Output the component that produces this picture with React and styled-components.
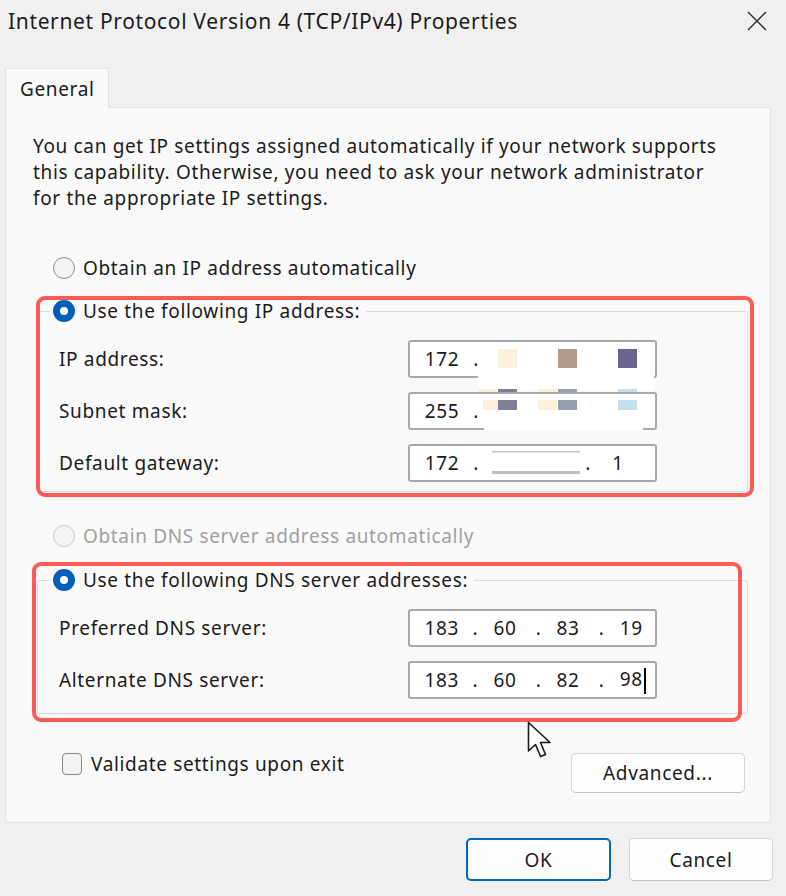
import styled, { createGlobalStyle } from 'styled-components';

const FONT = "'Noto Sans', 'Liberation Sans', Arial, sans-serif";

const GlobalStyle = createGlobalStyle`
  html, body {
    margin: 0;
    padding: 0;
  }
  body {
    background: #f0f0f0;
    font-family: ${FONT};
    letter-spacing: 0.65px;
    color: #1b1b1b;
  }
`;

const Window = styled.div`
  position: relative;
  width: 786px;
  height: 896px;
  overflow: hidden;
  background: #f0f0f0;
  display: flex;
  flex-direction: column;
`;

const TitleBar = styled.div`
  height: 42px;
  display: flex;
  align-items: center;
  justify-content: space-between;
  padding: 0 18px 0 8px;
`;

const Title = styled.div`
  font-size: 21px;
  color: #1b1b1b;
`;

const CloseButton = styled.div`
  width: 22px;
  height: 22px;
  display: flex;
  align-items: center;
  justify-content: center;
`;

const TabStrip = styled.div`
  margin-top: 26px;
  padding-left: 5px;
  display: flex;
`;

const Tab = styled.div`
  position: relative;
  z-index: 1;
  box-sizing: border-box;
  width: 104px;
  height: 40px;
  margin-bottom: -1px;
  padding-left: 14px;
  display: flex;
  align-items: center;
  font-size: 19px;
  background: #f9f9f9;
  border: 1px solid #e3e3e3;
  border-bottom: none;
`;

const Panel = styled.div`
  box-sizing: border-box;
  height: 716px;
  margin: 0 15px 0 5px;
  padding: 25px 22px 0 27px;
  background: #f9f9f9;
  border: 1px solid #e3e3e3;
  display: flex;
  flex-direction: column;
`;

const Description = styled.p`
  margin: 0;
  font-size: 19px;
  line-height: 26px;
  white-space: nowrap;
`;

const OptionRow = styled.div`
  display: flex;
  align-items: center;
  gap: 8px;
  height: 26px;
  font-size: 19px;
  color: ${(p) => (p.disabled ? '#a0a0a0' : '#1b1b1b')};
  margin: ${(p) => p.margin || '0'};
`;

const Radio = styled.span`
  box-sizing: border-box;
  width: 22px;
  height: 22px;
  border-radius: 50%;
  flex-shrink: 0;
  ${(p) =>
    p.checked
      ? `
    border: 7px solid #005fb8;
    box-shadow: inset 0 0 0 5px #ffffff;
    background: #ffffff;
  `
      : `
    background: #f3f3f3;
    border: 1.5px solid ${p.disabled ? '#c6c6c6' : '#8a8a8a'};
  `}
`;

const GroupWrap = styled.div`
  position: relative;
  margin: ${(p) => p.margin};
`;

const GroupBox = styled.fieldset`
  margin: 0;
  padding: 0;
  min-width: 0;
  border: 1px solid #dcdcdc;
  border-radius: 2px;
`;

const Legend = styled.legend`
  margin-left: 12px;
  padding: 0 6px 0 3px;
`;

const Rows = styled.div`
  display: flex;
  flex-direction: column;
  gap: 14px;
  padding: 16px 0 ${(p) => p.bottom}px 21px;
`;

const FieldRow = styled.div`
  display: flex;
  align-items: center;
`;

const FieldLabel = styled.label`
  width: 349px;
  font-size: 19px;
`;

const IpBox = styled.div`
  position: relative;
  box-sizing: border-box;
  width: 249px;
  height: 38px;
  padding-left: 8px;
  display: flex;
  align-items: center;
  background: #ffffff;
  border: 2px solid #a8a8a8;
  border-radius: 3px;
  font-size: 19px;
`;

const Octet = styled.span`
  width: 48px;
  text-align: center;
  white-space: nowrap;
`;

const Dot = styled.span`
  width: 12px;
  padding-left: 4px;
  text-align: center;
  visibility: ${(p) => (p.hidden ? 'hidden' : 'visible')};
`;

const Caret = styled.span`
  display: inline-block;
  width: 2px;
  height: 26px;
  margin-left: 1px;
  margin-right: -3px;
  vertical-align: middle;
  background: #000000;
`;

const Redaction = styled.svg`
  position: absolute;
  left: -2px;
  top: -2px;
  overflow: visible;
  pointer-events: none;
`;

const Highlight = styled.div`
  position: absolute;
  top: ${(p) => p.t}px;
  left: ${(p) => p.l}px;
  right: ${(p) => p.r}px;
  bottom: ${(p) => p.b}px;
  border: 4px solid #fd5a55;
  border-radius: 9px;
  pointer-events: none;
`;

const BottomRow = styled.div`
  display: flex;
  justify-content: space-between;
  align-items: flex-start;
  margin: 38px 3px 0 29px;
`;

const CheckLabel = styled.label`
  display: flex;
  align-items: center;
  gap: 9px;
  height: 24px;
  font-size: 19px;
`;

const CheckBox = styled.span`
  box-sizing: border-box;
  width: 20px;
  height: 22px;
  border: 1.5px solid #8a8a8a;
  border-radius: 4px;
  background: #f3f3f3;
`;

const Button = styled.button`
  box-sizing: border-box;
  width: ${(p) => p.w}px;
  height: ${(p) => p.h}px;
  margin-top: ${(p) => p.mt || 0}px;
  font-family: ${FONT};
  font-size: 19px;
  letter-spacing: 0.65px;
  color: #1b1b1b;
  background: #fdfdfd;
  border: ${(p) => (p.primary ? '2px solid #0067c0' : '1px solid #d4d4d4')};
  border-bottom-color: ${(p) => (p.primary ? '#0067c0' : '#c2c2c2')};
  border-radius: 5px;
  padding: 0;
`;

const Footer = styled.div`
  display: flex;
  justify-content: flex-end;
  gap: 18px;
  margin-top: 15px;
  padding-right: 13px;
`;

const Pointer = styled.svg`
  position: absolute;
  left: 527px;
  top: 721px;
  pointer-events: none;
`;

function IpField({ octets, dots = [true, true, true], caret, children }) {
  return (
    <IpBox>
      {octets.map((o, i) => (
        <span key={i} style={{ display: 'contents' }}>
          <Octet>
            {o}
            {caret && i === 3 ? <Caret /> : null}
          </Octet>
          {i < 3 ? <Dot hidden={!dots[i]}>.</Dot> : null}
        </span>
      ))}
      {children}
    </IpBox>
  );
}

function RadioOption({ checked, disabled, margin, children }) {
  return (
    <OptionRow disabled={disabled} margin={margin}>
      <Radio checked={checked} disabled={disabled} />
      <span>{children}</span>
    </OptionRow>
  );
}

export default function App() {
  return (
    <Window>
      <GlobalStyle />
      <TitleBar>
        <Title>Internet Protocol Version 4 (TCP/IPv4) Properties</Title>
        <CloseButton>
          <svg width="20" height="20" viewBox="0 0 20 20">
            <path d="M1 1 L19 19 M19 1 L1 19" stroke="#2b2b2b" strokeWidth="1.4" fill="none" />
          </svg>
        </CloseButton>
      </TitleBar>

      <TabStrip>
        <Tab>General</Tab>
      </TabStrip>

      <Panel>
        <Description>
          You can get IP settings assigned automatically if your network supports
          <br />
          this capability. Otherwise, you need to ask your network administrator
          <br />
          for the appropriate IP settings.
        </Description>

        <RadioOption margin="44px 0 0 20px">Obtain an IP address automatically</RadioOption>

        <GroupWrap margin="17px 0 0 4px">
          <GroupBox>
            <Legend>
              <RadioOption checked>Use the following IP address:</RadioOption>
            </Legend>
            <Rows bottom={9}>
              <FieldRow>
                <FieldLabel>IP address:</FieldLabel>
                <IpField octets={['172', '', '', '']} dots={[true, false, false]}>
                  <Redaction width="249" height="38">
                    <rect x="90" y="9" width="19" height="19" fill="#fdf0da" />
                    <rect x="150" y="9" width="19" height="19" fill="#b3998b" />
                    <rect x="210" y="9" width="19" height="19" fill="#6c638f" />
                    <rect x="70" y="28" width="176" height="22" fill="#ffffff" />
                  </Redaction>
                </IpField>
              </FieldRow>
              <FieldRow>
                <FieldLabel>Subnet mask:</FieldLabel>
                <IpField octets={['255', '', '', '']} dots={[true, false, false]}>
                  <Redaction width="249" height="38">
                    <rect x="70" y="-3" width="19" height="3" fill="#fdf0da" />
                    <rect x="90" y="-3" width="19" height="3" fill="#7d7d98" />
                    <rect x="130" y="-3" width="19" height="3" fill="#fdf0da" />
                    <rect x="150" y="-3" width="19" height="3" fill="#94a0b1" />
                    <rect x="210" y="-3" width="19" height="3" fill="#c5e0ea" />
                    <rect x="75" y="8" width="15" height="10" fill="#fdf0da" />
                    <rect x="90" y="8" width="19" height="10" fill="#80809a" />
                    <rect x="130" y="8" width="19" height="10" fill="#fdf0da" />
                    <rect x="150" y="8" width="19" height="10" fill="#94a0b0" />
                    <rect x="210" y="8" width="19" height="10" fill="#c5e0ea" />
                    <rect x="76" y="18" width="159" height="21" fill="#ffffff" />
                  </Redaction>
                </IpField>
              </FieldRow>
              <FieldRow>
                <FieldLabel>Default gateway:</FieldLabel>
                <IpField octets={['172', '', '', '1']} dots={[true, false, true]}>
                  <Redaction width="249" height="38">
                    <rect x="84" y="7" width="88" height="1.5" fill="#c6c6c6" />
                    <rect x="84" y="27" width="88" height="3" fill="#bfbfbf" />
                  </Redaction>
                </IpField>
              </FieldRow>
            </Rows>
          </GroupBox>
          <Highlight t={-2} l={-1} r={-6} b={-5} />
        </GroupWrap>

        <RadioOption disabled margin="31px 0 0 20px">
          Obtain DNS server address automatically
        </RadioOption>

        <GroupWrap margin="18px 0 0 4px">
          <GroupBox>
            <Legend>
              <RadioOption checked>Use the following DNS server addresses:</RadioOption>
            </Legend>
            <Rows bottom={14}>
              <FieldRow>
                <FieldLabel>Preferred DNS server:</FieldLabel>
                <IpField octets={['183', '60', '83', '19']} />
              </FieldRow>
              <FieldRow>
                <FieldLabel>Alternate DNS server:</FieldLabel>
                <IpField octets={['183', '60', '82', '98']} caret />
              </FieldRow>
            </Rows>
          </GroupBox>
          <Highlight t={-5} l={-5} r={6} b={-8} />
        </GroupWrap>

        <BottomRow>
          <CheckLabel>
            <CheckBox />
            <span>Validate settings upon exit</span>
          </CheckLabel>
          <Button w={174} h={40} mt={1}>
            Advanced...
          </Button>
        </BottomRow>
      </Panel>

      <Footer>
        <Button primary w={145} h={43}>
          OK
        </Button>
        <Button w={144} h={43}>
          Cancel
        </Button>
      </Footer>

      <Pointer width="27" height="40" viewBox="0 0 27 40">
        <path
          d="M1.5 1.5 L1.5 30 L8.5 23.5 L13.5 35.5 L18.5 33.5 L13.5 21.5 L23 21.5 Z"
          fill="#ffffff"
          stroke="#1b1b1b"
          strokeWidth="1.6"
          strokeLinejoin="round"
        />
      </Pointer>
    </Window>
  );
}
